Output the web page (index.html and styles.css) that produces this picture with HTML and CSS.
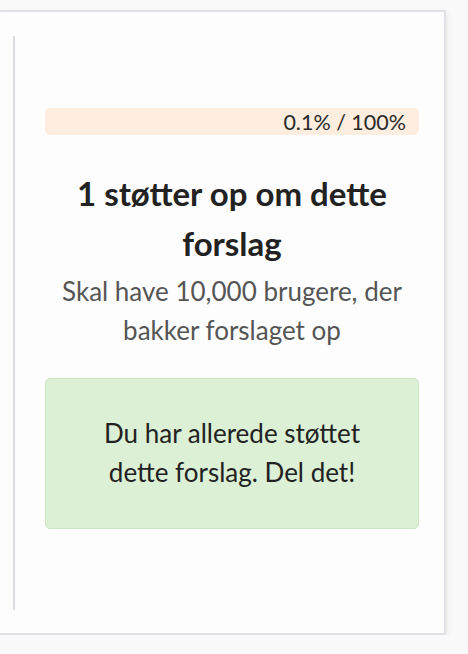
FILE: index.html
```html
<!DOCTYPE html>
<html lang="da">
<head>
<meta charset="utf-8">
<title>Forslag</title>
<link rel="stylesheet" href="styles.css">
</head>
<body>
<div class="card">
  <div class="column">
    <div class="progress">
      <span class="progress-text">0.1% / 100%</span>
    </div>
    <h3 class="title">1 støtter op om dette forslag</h3>
    <p class="subtitle">Skal have 10,000 brugere, der bakker forslaget op</p>
    <div class="notice">Du har allerede støttet dette forslag. Del det!</div>
  </div>
</div>
</body>
</html>
```
FILE: styles.css
```css
html, body {
  margin: 0;
  padding: 0;
  background: #f9f9fa;
}
body {
  font-family: Lato, "Open Sans", sans-serif;
  color: #222;
}
.card {
  box-sizing: border-box;
  width: 448px;
  height: 625px;
  margin: 10px 0 0 -2px;
  background: #fdfdfd;
  border: 2px solid #e0e0e6;
  border-left: none;
  box-shadow: 2px 3px 6px rgba(0,0,0,0.06);
  padding: 24px 25px 23px 15px;
  display: flex;
}
.column {
  flex: 1;
  border-left: 2px solid #dcdce0;
  padding: 72px 0 0 30px;
  text-align: center;
}
.progress {
  height: 27px;
  background: #fdeedf;
  border-radius: 5px;
  display: flex;
  align-items: center;
  justify-content: flex-end;
  padding-right: 13px;
}
.progress-text {
  font-size: 21.5px;
  color: #2a2a2a;
}
.title {
  margin: 33px 0 0;
  font-size: 33px;
  font-weight: 700;
  line-height: 50px;
  color: #222;
}
.subtitle {
  margin: 4px 0 0;
  font-size: 26px;
  line-height: 39px;
  color: #555;
}
.notice {
  margin-top: 28px;
  box-sizing: border-box;
  height: 151px;
  background: #dcf0d5;
  border: 1px solid #cce6c2;
  border-radius: 5px;
  padding: 35px 50px 0;
  font-size: 26px;
  line-height: 39px;
  color: #222;
}
```
